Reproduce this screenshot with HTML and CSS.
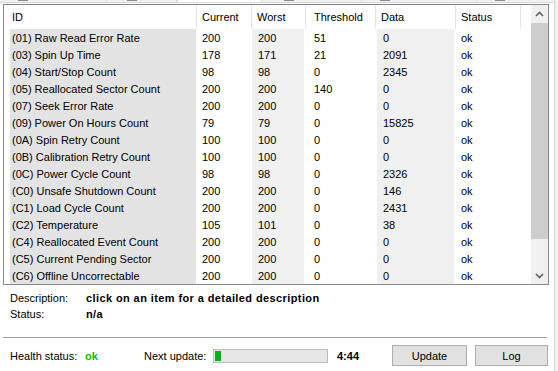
FILE: index.html
```html
<!DOCTYPE html>
<html>
<head>
<meta charset="utf-8">
<link rel="stylesheet" href="styles.css">
</head>
<body>
<div class="tabs">
  <div class="tab" style="width:107px"><span class="mark" style="margin-left:18px"></span></div>
  <div class="tab" style="width:70px"><span class="mark" style="margin-left:20px"></span></div>
  <div class="tab sel" style="width:85px"></div>
  <div class="tab" style="width:100px"><span class="mark" style="margin-left:22px"></span></div>
  <div class="tab" style="width:115px"><span class="mark" style="margin-left:18px"></span></div>
  <div class="tab" style="width:78px"><span class="mark" style="margin-left:18px"></span></div>
</div>
<div class="page">
  <div class="list">
    <div class="grid-area">
      <div class="row head">
        <div class="c id">ID</div>
        <div class="c">Current</div>
        <div class="c">Worst</div>
        <div class="c th">Threshold</div>
        <div class="c">Data</div>
        <div class="c">Status</div>
        <div class="c fill"></div>
      </div>
      <div id="rows"></div>
    </div>
    <div class="scroll">
      <div class="arrow"><svg width="9" height="6" viewBox="0 0 9 6"><path d="M1 5 L4.5 1.5 L8 5" fill="none" stroke="#606060" stroke-width="1.6"/></svg></div>
      <div class="thumb"></div>
      <div class="track"></div>
      <div class="arrow"><svg width="9" height="6" viewBox="0 0 9 6"><path d="M1 1 L4.5 4.5 L8 1" fill="none" stroke="#606060" stroke-width="1.6"/></svg></div>
    </div>
  </div>
  <div class="info">
    <div class="irow"><span class="lab">Description:</span><b class="val">click on an item for a detailed description</b></div>
    <div class="irow"><span class="lab">Status:</span><b class="val">n/a</b></div>
  </div>
  <div class="sep"></div>
  <div class="bottom">
    <span class="hl">Health status:</span>
    <b class="ok">ok</b>
    <span class="nu">Next update:</span>
    <div class="prog"><div class="bar"></div></div>
    <b class="time">4:44</b>
    <button class="btn upd">Update</button>
    <button class="btn log">Log</button>
  </div>
</div>
<script src="app.js"></script>
</body>
</html>
```
FILE: app.js
```js
const data = [
["(01) Raw Read Error Rate","200","200","51","0","ok"],
["(03) Spin Up Time","178","171","21","2091","ok"],
["(04) Start/Stop Count","98","98","0","2345","ok"],
["(05) Reallocated Sector Count","200","200","140","0","ok"],
["(07) Seek Error Rate","200","200","0","0","ok"],
["(09) Power On Hours Count","79","79","0","15825","ok"],
["(0A) Spin Retry Count","100","100","0","0","ok"],
["(0B) Calibration Retry Count","100","100","0","0","ok"],
["(0C) Power Cycle Count","98","98","0","2326","ok"],
["(C0) Unsafe Shutdown Count","200","200","0","146","ok"],
["(C1) Load Cycle Count","200","200","0","2431","ok"],
["(C2) Temperature","105","101","0","38","ok"],
["(C4) Reallocated Event Count","200","200","0","0","ok"],
["(C5) Current Pending Sector","200","200","0","0","ok"],
["(C6) Offline Uncorrectable","200","200","0","0","ok"]
];
const cls = ["c id shade-d","c","c shade-l w","c th","c shade-l d","c st"];
const host = document.getElementById("rows");
for (const r of data) {
  const row = document.createElement("div");
  row.className = "row";
  r.forEach((v, i) => {
    const c = document.createElement("div");
    c.className = cls[i];
    c.textContent = v;
    row.appendChild(c);
  });
  const f = document.createElement("div");
  f.className = "c fill";
  row.appendChild(f);
  host.appendChild(row);
}
```
FILE: styles.css
```css
* { box-sizing: border-box; }
html, body { margin: 0; padding: 0; }
body {
  background: #f0f0f0;
  font-family: "Liberation Sans", Arial, sans-serif;
  font-size: 11px;
  color: #000;
  width: 558px;
  height: 371px;
  overflow: hidden;
}
.tabs { display: flex; height: 2px; }
.tab {
  height: 2px;
  background: #f0f0f0;
  border-right: 1px solid #d9d9d9;
  display: flex;
}
.tab.sel { background: #fff; border-left: 1px solid #d9d9d9; }
.mark { display: block; width: 10px; height: 1px; background: #8a8a8a; }
.page {
  width: 555px;
  height: 369px;
  background: #fff;
  border-top: 1px solid #d9d9d9;
  border-right: 1px solid #d9d9d9;
  padding: 1px 0 0 3px;
}
.list {
  width: 546px;
  height: 281px;
  border: 1px solid #828790;
  display: flex;
}
.grid-area { width: 527px; }
.row {
  display: grid;
  grid-template-columns: 193px 55px 54px 70px 80px 65px 10px;
  height: 17px;
  line-height: 18px;
}
.row.head { height: 24px; line-height: 24px; }
.head .c { border-right: 1px solid #e5e5e5; }
.head .c.fill { border-right: 0; }
.c { padding-left: 5px; white-space: nowrap; overflow: hidden; color: #000; }
.c.st { color: #000; }
.c.id { padding-left: 8px; }
.c.th { padding-left: 8px; }
.shade-d { background: #e3e3e3; border-left: 6px solid #fff; border-right: 1px solid #fff; }
.c.id.shade-d { padding-left: 2px; }
.shade-l { background: #f0f0f0; }
.c.w { border-right: 2px solid #fff; padding-left: 6px; }
.c.d { border-left: 1px solid #fff; border-right: 2px solid #fff; padding-left: 6px; }
.scroll {
  width: 17px;
  height: 279px;
  background: #f0f0f0;
  display: flex;
  flex-direction: column;
}
.arrow { height: 17px; display: flex; align-items: center; justify-content: center; }
.thumb { height: 216px; background: #cdcdcd; margin: 1px 0 0; }
.track { flex: 1; }
.info { padding: 5px 0 0 7px; }
.irow { height: 16px; line-height: 16px; display: flex; }
.lab { width: 76px; }
.val { letter-spacing: 0.4px; }
.sep { width: 544px; height: 1px; background: #a0a0a0; margin-top: 15px; }
.bottom {
  display: flex;
  align-items: center;
  height: 21px;
  margin-top: 7px;
  padding-left: 7px;
}
.hl { width: 75px; }
.ok { width: 59px; color: #00c000; }
.nu { width: 69px; }
.prog {
  width: 115px;
  height: 14px;
  border: 1px solid #bcbcbc;
  background: #e6e6e6;
  padding: 1px;
}
.bar { width: 6px; height: 100%; background: #06b025; }
.time { margin-left: 9px; width: 55px; }
.btn {
  height: 21px;
  background: #e1e1e1;
  border: 1px solid #adadad;
  font-family: "Liberation Sans", Arial, sans-serif;
  font-size: 11px;
  color: #000;
  padding: 0;
}
.upd { width: 75px; }
.log { width: 73px; margin-left: 8px; }
```
